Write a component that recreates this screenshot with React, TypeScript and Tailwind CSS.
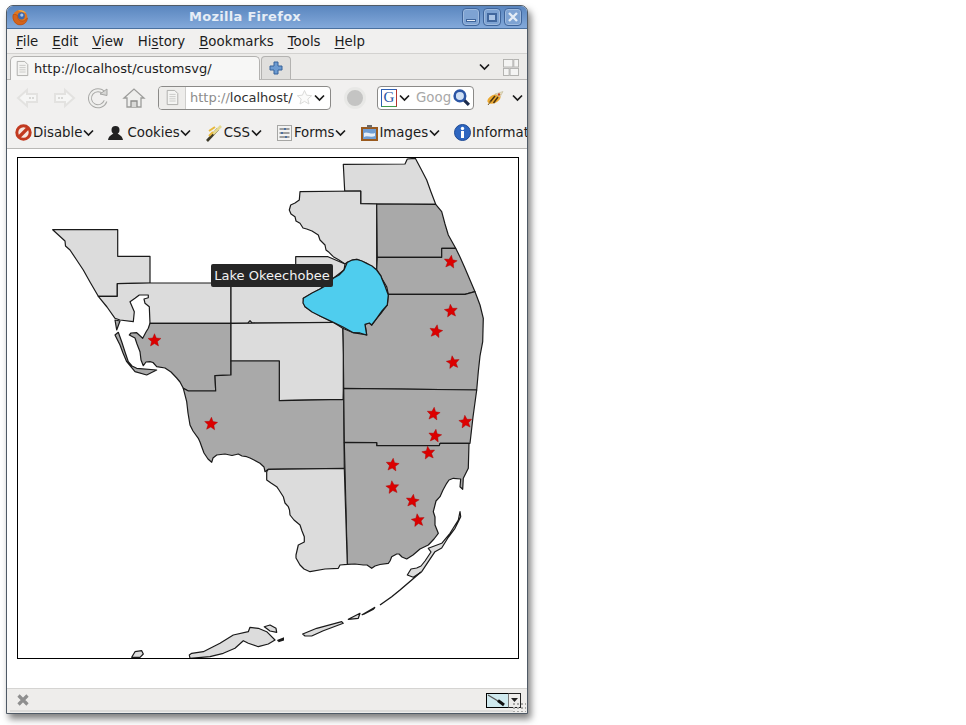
import React from "react";

const Chevron = ({ className = "" }: { className?: string }) => (
  <svg width="11" height="8" viewBox="0 0 11 8" className={className}>
    <path d="M1 1.5 L5.5 6 L10 1.5" fill="none" stroke="#1a1a1a" strokeWidth="1.7" />
  </svg>
);

const U = ({ children }: { children: React.ReactNode }) => <span className="underline underline-offset-2">{children}</span>;

const Doc = ({ size = 17 }: { size?: number }) => (
  <svg width={size} height={size + 2} viewBox="0 0 17 19">
    <path d="M2.5 1.5 H11 L14.5 5 V17.5 H2.5 Z" fill="#f4f4f2" stroke="#a9a9a6" />
    <path d="M5 6 H12 M5 8.5 H12 M5 11 H12 M5 13.5 H12" stroke="#c6c6c4" strokeWidth="1" />
  </svg>
);

const WinBtn = ({ children }: { children: React.ReactNode }) => (
  <div className="w-[18px] h-[18px] rounded-[4px] border border-[#3f659b] bg-[#7ea3d3] shadow-[inset_0_0_0_1px_rgba(255,255,255,0.25)] flex items-center justify-center">{children}</div>
);

const LIGHT = "#dcdcdc";
const DARK = "#a9a9a9";

type Poly = { fill: string; d: string };

const polys: Poly[] = [
  { fill: LIGHT, d: "343.3,164.3 405,164 407.3,159 415.3,158.3 421,169 426.7,180 431,192 435.7,204.3 376.7,204 360.7,203.7 360.7,191 344.7,191" },
  { fill: LIGHT, d: "300,191.7 360.7,191 360.7,203.7 376.7,204 376.7,270 366,263 357,259.3 347.3,262.3 345,264 339,260 333.3,256.7 328.3,251.7 326,250 325,245 320,240 318.3,235 312,231 306.7,229 303,228 300,223.3 296,221 295,216.7 291,214 289.3,210 290.7,205 295,203 299.3,200" },
  { fill: DARK, d: "376.7,204 435.7,204.3 441.7,211.7 445,224 448.3,235 455.7,248.3 441.7,248.3 441.7,257.3 377.3,257.3" },
  { fill: DARK, d: "377.3,257.3 441.7,257.3 441.7,248.3 455.7,248.3 460,257 465,268.3 470,280 475,291.7 465,294.3 388.3,294.3 386.7,286.7 381.7,278.3 376.7,270" },
  { fill: DARK, d: "388.3,294.3 465,294.3 475,291.7 480,305 483.3,318.3 482.7,341.7 480,356 478.3,371.7 476.7,390 343.7,388.3 343.3,355 342.7,328.3 353.3,332.7 366.7,335 365,324.3 369.3,323 371.7,325 376.7,318.3 382,312 387.3,305" },
  { fill: LIGHT, d: "52.7,229.7 117.7,229.7 117.7,256.3 150,256.3 150,283 117.3,283.7 117.3,296.3 98.3,296.3 90,282 83.3,270 76,259 70,250 65.5,246 65,241" },
  { fill: LIGHT, d: "117.3,283.7 150,283 231,283 231,323.3 150,323.3 149.3,306.7 145,303.3 144,299 148.3,297.7 148.3,295 139.3,295 135,298.3 130,301.7 134.3,311.7 133.3,321.7 120,320 115,318.3 107,307 98.3,296.3 117.3,296.3" },
  { fill: LIGHT, d: "231,283 295.7,283 295.7,256.7 328,256.7 345,264 344,270 333.3,278.3 320,289 303.3,298.3 305,306.7 320,316 333.3,322.3 252,323 250,320.7 248,323 231,323.3" },
  { fill: DARK, d: "150,323.3 231,323.3 231,375 215,375.7 215.7,391 188.3,391 183.3,388.3 180,382 176.7,378 171,372 165,368 156.7,366.7 153,362.5 150,361.7 146,362 143.3,365.7 141,360 140,351.7 137,344 135,338 129.3,335 131,333 136.7,332.7 142.7,338.3 146,332 148.3,328.3" },
  { fill: DARK, d: "115,335 118.3,332.3 121.7,341.7 125,352 128.3,361.7 132,366 136.7,368.3 156.7,370 146.7,375 135,371.7 126.7,361.7 123,353 120,345" },
  { fill: DARK, d: "115,320 120,321 116.7,330" },
  { fill: LIGHT, d: "231,323.3 333.3,322.3 342.7,328.3 343.3,355 343.3,399.3 279.3,400.7 279.3,361 231,361" },
  { fill: DARK, d: "231,361 279.3,361 279.3,400.7 343.3,399.3 343.7,388.3 344.3,468.3 268.3,469.3 265,471.7 264,467 260,463.3 254,460 250,458 246.7,456.7 242,456 238.3,454 232,455.5 225,454 216.7,455 213,458 211.7,462.3 208,459 204,453 201.7,446.7 200,442 198.3,438.3 193,431 190,425 188,413 186.7,401.7 183.3,388.3 188.3,391 215.7,391 215,375.7 231,375" },
  { fill: DARK, d: "343.7,388.3 476.7,390 473,417 470,443.3 440,443.3 439.3,445.7 376.7,445.7 376.7,442.7 344.3,442.3" },
  { fill: DARK, d: "344.3,442.3 376.7,442.7 376.7,445.7 439.3,445.7 440,443.3 469,443.3 468.3,468.3 463.3,478.3 462.7,489.3 460,486.7 460.7,479 453.3,478.3 449,480 446.7,483.3 443,490 440,496.7 436,501 433.3,511.7 435,517 435,525 438.3,533.3 434,539 428.3,545 420,549 413,555 406.7,559 402,557 399,554 396.7,554 391.7,556.7 390,561 388.3,563.3 380,564.5 375,566 371.7,568.3 367,565 363.3,565 355,564 347.3,564.3" },
  { fill: LIGHT, d: "268.3,469.3 344.3,468.3 347.3,564.3 340,565 338.3,568.3 325,569 310,571.7 304,569 300,565 296,558 296,555 298.3,545 304.3,542 304.3,536.7 302,531 300,525 294,520 290,515 289.5,510 288.3,506.7 285,503 283.3,496.7 279,490 276.7,486.7 271,483 266.7,480 266.7,471.7" },
  { fill: LIGHT, d: "460,511.7 460.7,516.7 455,528.3 448.3,537.3 441.7,548 435,551.7 428.3,561.7 421.7,571.7 413.3,577.3 407.3,575 411,569 416.7,568 421,566 425,561 431,552 428.3,548.3 441.7,543.3 450,533.3 458.3,520" },
  { fill: LIGHT, d: "348.3,619.3 360,613.3 358.3,618.3" },
  { fill: LIGHT, d: "302.7,634 316.7,628.3 341.7,621.7 343.3,623.3 323.3,630.7 311.7,636 305,636" },
  { fill: LIGHT, d: "189.3,655 191.7,653.3 203.3,651.7 220,643.3 233.3,635 248.3,631.7 250,627.3 258.3,628.3 266.7,631.7 275,640 268.3,644 258.3,646.7 248.3,643.3 243.3,640.7 235,648.3 223.3,653.3 210,656.7 190,658.3" },
  { fill: LIGHT, d: "264.3,626.7 270,625 276,628.3 276.7,632.3 270,631" },
  { fill: LIGHT, d: "131.7,657.3 135,651.7 141.7,650.7 143.3,654 140,657.3" },
];

const lines = [
  "380,605 391.7,596.7 400,590 411.7,580 421,572",
  "361.7,615 375,607.3 373.3,609.3 363.3,614.3",
  "277.3,640.7 283.3,638.3 283.3,640 278.3,641.7",
];

const lake = "303.3,298.3 312,293 320,289 327,285 333.3,278.3 339,275 344,270 347.3,262.3 352,260 356.7,259.3 362,261 366.7,263.3 372,266 376.7,270 381,276 381.7,278.3 385,286 388.3,295 387.3,305 382,311 376.7,318.3 371.7,325 369.3,323 365,324.3 366.7,335 360,333 353.3,332.7 343,327 333.3,322.3 320,316 312,312 305,306.7 303,303";

const stars: [number, number, number][] = [
  [450.5, 262, 8], [451, 311, -6], [436, 331.5, 10], [453, 362.5, -8], [433.5, 414, 6], [465.5, 422, -6],
  [435, 436, 8], [428.5, 453, -8], [392.5, 465, 6], [392.5, 487.5, -6], [412.5, 501, 8], [418, 520.5, -8],
  [211, 424, 4], [154.5, 340.5, 0],
];

const starPath = (() => {
  const pts: string[] = [];
  for (let i = 0; i < 10; i++) {
    const r = i % 2 === 0 ? 6.8 : 3.1;
    const a = (-90 + i * 36) * (Math.PI / 180);
    pts.push(`${(r * Math.cos(a)).toFixed(2)},${(r * Math.sin(a)).toFixed(2)}`);
  }
  return pts.join(" ");
})();

const FoxIcon = () => (
  <svg width="17" height="17" viewBox="0 0 16 16">
    <circle cx="8" cy="8" r="7.4" fill="#e0761f" />
    <circle cx="9.3" cy="6.3" r="3.6" fill="#3d68ad" />
    <circle cx="9.8" cy="5.6" r="1.6" fill="#a9c6ea" />
    <path d="M1.2 5 C0 10 3.5 15.4 8 15.4 C12.5 15.4 15.5 12 15.4 8.4 C14 11 11 12.2 8.5 11.3 C6.5 10.6 5.3 8.5 6 6.5 L4 5 Z" fill="#d4641c" stroke="#a8410f" strokeWidth=".5" />
    <path d="M6 1.2 C9 .2 12.5 1 14 3.5 L10.5 2.4 Z" fill="#f3b24a" />
  </svg>
);

export default function App() {
  return (
    <div className="min-h-screen bg-white pl-[6px] pt-[5px] font-['DejaVu_Sans',sans-serif] text-[13.33px] text-[#1c1c1c]">
      <div className="w-[522px] h-[709px] flex flex-col overflow-hidden rounded-t-[7px] border border-[#4f5a66] bg-[#f1f0ef] shadow-[3px_5px_7px_rgba(0,0,0,0.5)]">
        {/* Title */}
        <div className="h-[23px] shrink-0 flex items-center pl-[1px] pr-[5px] bg-gradient-to-b from-[#5a86bf] to-[#83a9da] border-b border-[#49709f]">
          <div className="w-[20px] flex justify-center pl-[4px]"><FoxIcon /></div>
          <div className="flex-1 text-center text-[13px] font-bold tracking-[0.3px] text-[#e6edf6]">Mozilla Firefox</div>
          <div className="flex gap-[3px]">
            <WinBtn><div className="w-[10px] h-[3px] mt-[7px] bg-[#e4ecf6] border border-[#3f659b]" /></WinBtn>
            <WinBtn><div className="w-[10px] h-[9px] border-2 border-[#41679e] bg-[#aac4e6]" /></WinBtn>
            <WinBtn>
              <svg width="12" height="12" viewBox="0 0 12 12"><path d="M2 2 L10 10 M10 2 L2 10" stroke="#e4ecf6" strokeWidth="2.4" /></svg>
            </WinBtn>
          </div>
        </div>

        {/* Menu */}
        <div className="h-[25px] shrink-0 flex items-center gap-[14px] pl-[9px] pt-[2px] border-b border-[#d3d2d0]">
          <span><U>F</U>ile</span>
          <span><U>E</U>dit</span>
          <span><U>V</U>iew</span>
          <span>Hi<U>s</U>tory</span>
          <span><U>B</U>ookmarks</span>
          <span><U>T</U>ools</span>
          <span><U>H</U>elp</span>
        </div>

        {/* Tabs */}
        <div className="h-[26px] shrink-0 flex items-end pl-[3px] pr-[8px] border-b border-[#b9b8b6] bg-[#ecebe9]">
          <div className="w-[250px] h-[24px] flex items-center gap-[4px] pl-[4px] rounded-t-[5px] border border-b-0 border-[#b3b2b0] bg-[#f7f7f6] mb-[-1px]">
            <Doc size={15} />
            <span className="text-[13px]">http://localhost/customsvg/</span>
          </div>
          <div className="w-[30px] h-[23px] flex items-center justify-center ml-[1px] rounded-t-[4px] border border-b-0 border-[#b3b2b0] bg-[#e0dfdd]">
            <svg width="16" height="16" viewBox="0 0 16 16"><path d="M6 2 H10 V6 H14 V10 H10 V14 H6 V10 H2 V6 H6 Z" fill="#6d9bd1" stroke="#37629b" strokeWidth="1" /></svg>
          </div>
          <div className="flex-1" />
          <div className="h-[24px] flex items-center gap-[13px]">
            <Chevron />
            <svg width="16" height="17" viewBox="0 0 17 18" fill="#f4f4f3" stroke="#b0b0ae">
              <rect x=".5" y=".5" width="10" height="8" /><rect x="11.5" y=".5" width="5" height="8" />
              <rect x=".5" y="10" width="6" height="7.5" /><rect x="7.5" y="10" width="9" height="7.5" />
            </svg>
          </div>
        </div>

        {/* Nav */}
        <div className="h-[35px] shrink-0 flex items-center pl-[8px]">
          <svg width="26" height="22" viewBox="0 0 26 22" fill="none">
            <path d="M12 3 L3 11 L12 19 V15 H22 V7 H12 Z" stroke="#e3e2e0" strokeWidth="2" fill="#f6f6f5" />
            <path d="M14 11 h5" stroke="#d8d8d6" strokeWidth="2" strokeDasharray="2 1" />
          </svg>
          <svg width="26" height="22" viewBox="0 0 26 22" fill="none" className="ml-[10px]">
            <path d="M14 3 L23 11 L14 19 V15 H4 V7 H14 Z" stroke="#e3e2e0" strokeWidth="2" fill="#f6f6f5" />
            <path d="M7 11 h5" stroke="#d8d8d6" strokeWidth="2" strokeDasharray="2 1" />
          </svg>
          <svg width="22" height="22" viewBox="0 0 22 22" fill="none" className="ml-[10px]">
            <path d="M17 6 A8 8 0 1 0 18.5 14" stroke="#a9a9a7" strokeWidth="4" />
            <path d="M17 6 A8 8 0 1 0 18.5 14" stroke="#efefed" strokeWidth="2" />
            <path d="M13 7 L20 8.5 V2 Z" fill="#d6d6d4" stroke="#a5a5a3" />
          </svg>
          <svg width="24" height="22" viewBox="0 0 24 22" fill="none" className="ml-[13px]">
            <path d="M2 11 L12 2 L22 11 H19 V20 H5 V11 Z" fill="#efefed" stroke="#9d9d9b" strokeWidth="1.3" />
            <path d="M9 20 V14 H15 V20" fill="#d9d9d7" stroke="#8d8d8b" strokeWidth="1.3" />
          </svg>
          <div className="ml-[12px] w-[173px] h-[24px] flex items-center rounded-[4px] border border-[#8b8a88] bg-white overflow-hidden">
            <div className="w-[27px] h-full shrink-0 flex items-center justify-center bg-[#eeedeb] border-r border-[#cfcecc]"><Doc size={15} /></div>
            <span className="ml-[4px] text-[13px] text-[#8c8c8c] w-[106px] shrink-0 whitespace-nowrap">http://<span className="text-[#303030]">localhost/</span></span>
            <svg width="17" height="17" viewBox="0 0 17 17" className="shrink-0"><path d="M8.5 1.5 L10.6 6.2 L15.7 6.7 L11.8 10 L13 15 L8.5 12.4 L4 15 L5.2 10 L1.3 6.7 L6.4 6.2 Z" fill="#fbfbfa" stroke="#dcdcda" /></svg>
            <Chevron className="ml-[1px] shrink-0" />
          </div>
          <div className="ml-[13px] w-[22px] h-[22px] rounded-full bg-[#c4c4c3] border-[3px] border-[#e8e8e6]" />
          <div className="ml-[11px] w-[97px] h-[24px] flex items-center rounded-[4px] border border-[#8b8a88] bg-white overflow-hidden">
            <div className="ml-[3px] w-[16px] h-[18px] shrink-0 border border-t-[#2c5fb4] border-l-[#2c5fb4] border-r-[#b5342e] border-b-[#3f9a48] flex items-center justify-center text-[15px] leading-none text-[#2a56a6] font-['Liberation_Serif',serif]">G</div>
            <Chevron className="ml-[2px] shrink-0" />
            <span className="ml-[6px] w-[36px] shrink-0 overflow-hidden whitespace-nowrap text-[13.33px] text-[#a8a8a8]">Google</span>
            <svg width="19" height="19" viewBox="0 0 18 18" className="shrink-0" fill="none">
              <path d="M11.5 11.5 L16 16" stroke="#1b2b4d" strokeWidth="3" />
              <circle cx="7.5" cy="7.5" r="5" fill="#cfe0f5" stroke="#2b56a5" strokeWidth="2.4" />
            </svg>
          </div>
          <svg width="18" height="18" viewBox="0 0 18 18" className="ml-[12px]">
            <ellipse cx="8" cy="10" rx="7" ry="4" transform="rotate(-25 8 10)" fill="#eda92f" />
            <path d="M4 13 L9 7 M7.5 14 L12 8" stroke="#4a3412" strokeWidth="1.5" />
            <path d="M9 5 L17 2.5 L14 8 Z" fill="#e8dfc0" stroke="#b9b08a" strokeWidth=".5" />
            <path d="M2 16 L5 12" stroke="#7a5a20" />
            <circle cx="13" cy="5.5" r="1.2" fill="#c9471c" />
          </svg>
          <Chevron className="ml-[8px]" />
        </div>

        {/* Developer bar */}
        <div className="h-[34px] shrink-0 flex items-center pl-[8px] pt-[2px] whitespace-nowrap overflow-hidden border-b border-[#b9b8b6]">
          <svg width="17" height="17" viewBox="0 0 17 17" fill="none" className="shrink-0">
            <circle cx="8.5" cy="8.5" r="6.7" fill="#f5e7e0" stroke="#c23a20" strokeWidth="3" />
            <path d="M4 13 L13 4" stroke="#c23a20" strokeWidth="3.2" />
          </svg>
          <span className="ml-[1px]">Disable</span>
          <Chevron className="ml-[1px] shrink-0" />
          <svg width="17" height="16" viewBox="0 0 17 16" className="ml-[13px] shrink-0">
            <circle cx="8.5" cy="5" r="4" fill="#222" />
            <path d="M1 15 C2 10 5.5 10 6.5 8 H10.5 C11.5 10 15 10 16 15 Z" fill="#222" />
          </svg>
          <span className="ml-[3px]">Cookies</span>
          <Chevron className="shrink-0" />
          <svg width="17" height="18" viewBox="0 0 17 18" className="ml-[15px] shrink-0">
            <path d="M1 17 L12 5" stroke="#3d3a2a" strokeWidth="2.6" />
            <path d="M7 10 L15 2" stroke="#e4d98f" strokeWidth="2.6" />
            <path d="M3 7 L9 3 M3 12 L7 8" stroke="#e8b93c" strokeWidth="2" />
          </svg>
          <span className="ml-[1px]">CSS</span>
          <Chevron className="ml-[1px] shrink-0" />
          <svg width="15" height="16" viewBox="0 0 15 16" className="ml-[15px] shrink-0">
            <rect x=".5" y=".5" width="14" height="15" fill="#f3f3f2" stroke="#a6a6a4" />
            <path d="M2.5 4 H12.5 M2.5 8 H12.5 M2.5 12 H12.5" stroke="#4a4a4a" />
            <path d="M8 3 V5 M5 7 V9 M9 11 V13" stroke="#2f5f9f" strokeWidth="1.5" />
          </svg>
          <span className="ml-[2px]">Forms</span>
          <Chevron className="ml-[1px] shrink-0" />
          <svg width="17" height="16" viewBox="0 0 17 16" className="ml-[15px] shrink-0">
            <rect x="1" y="3" width="15" height="12" fill="#6f9dd4" stroke="#9a5a1e" strokeWidth="2" />
            <path d="M3 8 C6 6 10 10 14 8 V11 C10 13 6 10 3 12 Z" fill="#e8eff8" />
            <rect x="6" y="0" width="5" height="2.5" fill="#6a6a6a" />
          </svg>
          <span className="ml-[1px]">Images</span>
          <Chevron className="ml-[1px] shrink-0" />
          <svg width="17" height="17" viewBox="0 0 17 17" className="ml-[14px] shrink-0">
            <circle cx="8.5" cy="8.5" r="8" fill="#2e66c0" stroke="#1f4a94" />
            <rect x="7" y="7" width="3" height="7" fill="#fff" />
            <circle cx="8.5" cy="4.5" r="1.7" fill="#fff" />
          </svg>
          <span className="ml-[1px]">Information</span>
        </div>

        {/* Page */}
        <div className="flex-1 min-h-0 bg-white pl-[10px] pt-[8px]">
          <div className="relative w-[502px] h-[502px] border border-black">
            <svg width="500" height="500" viewBox="18 158 500 500" className="block">
              {polys.map((p, i) => (
                <polygon key={i} points={p.d} fill={p.fill} stroke="#1a1a1a" strokeWidth="1.2" strokeLinejoin="round" />
              ))}
              {lines.map((p, i) => (
                <polyline key={i} points={p} fill="none" stroke="#1a1a1a" strokeWidth="1.4" />
              ))}
              <polygon points={lake} fill="#4fcdee" stroke="#1a1a1a" strokeWidth="1.3" strokeLinejoin="round" />
              {stars.map(([x, y, r], i) => (
                <polygon key={i} points={starPath} transform={`translate(${x} ${y}) rotate(${r})`} fill="#dc0000" stroke="#a80000" strokeWidth=".4" />
              ))}
            </svg>
            <div className="absolute left-[193px] top-[106px] h-[23px] w-[122px] flex items-center justify-center rounded-[2px] bg-[#262626] text-[13px] text-[#f2f2f2] whitespace-nowrap">
              Lake Okeechobee
            </div>
          </div>
        </div>

        {/* Status */}
        <div className="h-[25px] shrink-0 border-t border-[#d5d4d2] bg-[#eeedeb] flex items-start relative">
          <svg width="14" height="14" viewBox="0 0 14 14" className="ml-[9px] mt-[4px]">
            <path d="M2.5 2.5 L11.5 11.5 M11.5 2.5 L2.5 11.5" stroke="#8f8f8f" strokeWidth="3.2" />
          </svg>
          <div className="flex-1" />
          <div className="mt-[4px] w-[23px] h-[15px] border border-black border-r-[#777] bg-[#cfe9ee] flex items-center justify-center">
            <svg width="21" height="13" viewBox="0 0 21 13"><path d="M1 1 L11 7" stroke="#555" strokeWidth="1.3" /><path d="M11 6.5 L17 11" stroke="#111" strokeWidth="3" /></svg>
          </div>
          <div className="mt-[4px] mr-[6px] w-[12px] h-[15px] border border-[#222] border-l-0 flex items-center justify-center">
            <svg width="7" height="5" viewBox="0 0 7 5"><path d="M0 0 H7 L3.5 4 Z" fill="#222" /></svg>
          </div>
          <div className="absolute right-[1px] bottom-[1px] w-[14px] h-[10px] bg-[radial-gradient(#a9a9a7_1px,transparent_1px)] bg-[length:4px_4px]" />
          <div className="absolute left-[3px] right-[14px] bottom-[1px] h-[2px] bg-[#dcdbd9]" />
        </div>
      </div>
    </div>
  );
}
